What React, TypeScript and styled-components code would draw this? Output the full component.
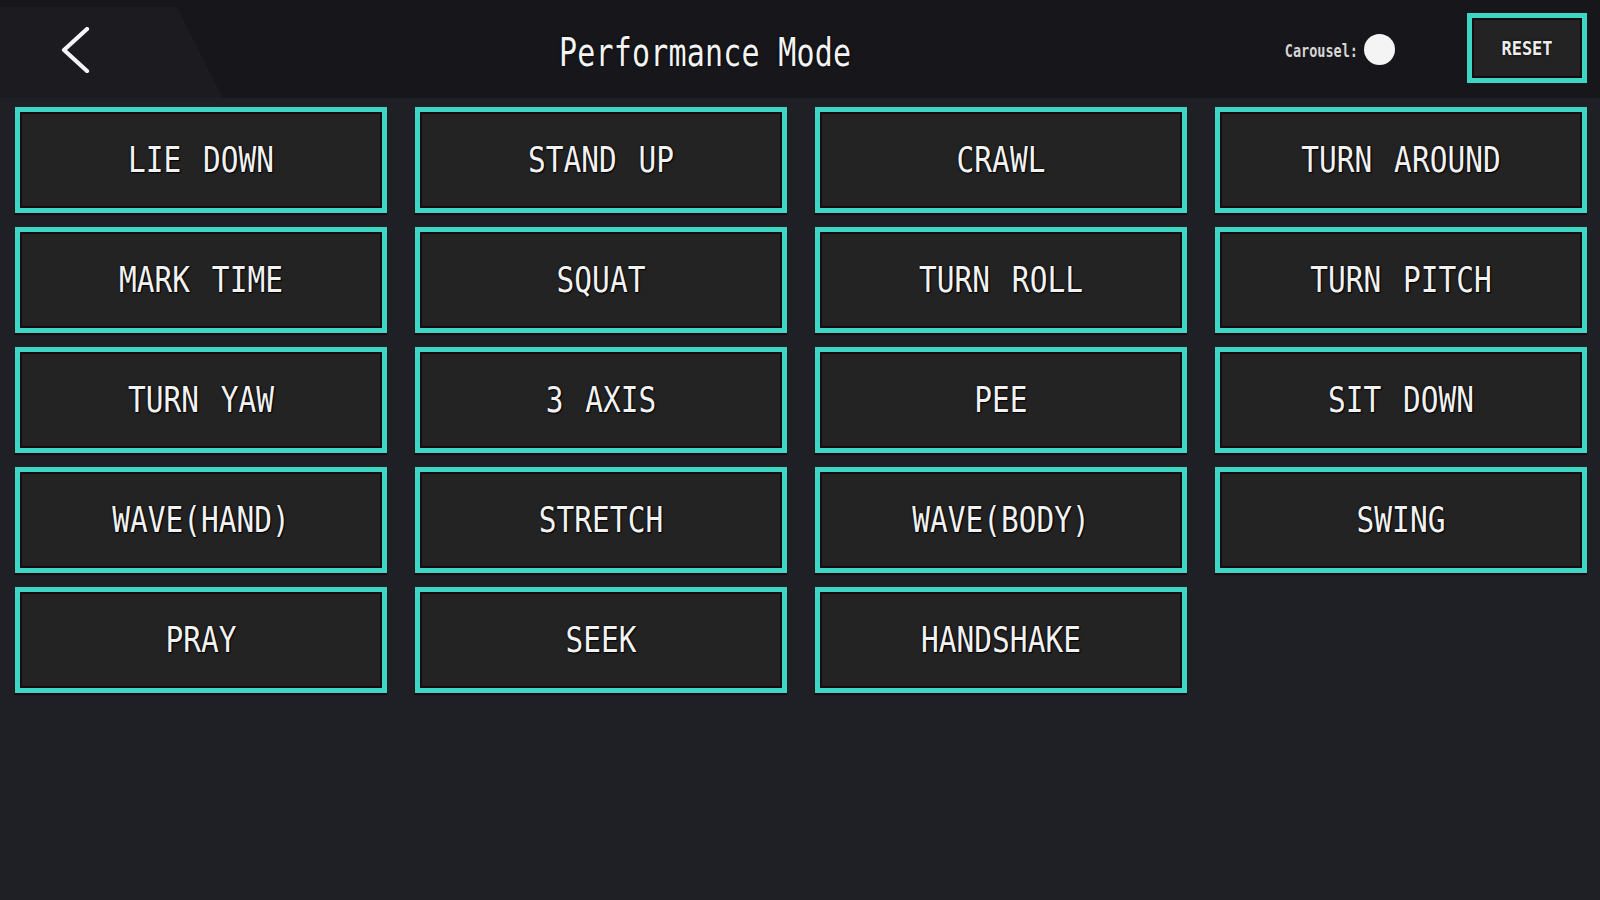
import React, { useState } from 'react'
import styled, { createGlobalStyle } from 'styled-components'

const GlobalStyle = createGlobalStyle`
  html, body {
    margin: 0;
    padding: 0;
    background: #1f2026;
  }
  * {
    box-sizing: border-box;
  }
`

const Page = styled.div`
  width: 1600px;
  height: 900px;
  background: #1f2026;
  display: flex;
  flex-direction: column;
  overflow: hidden;
  font-family: 'DejaVu Sans Mono', 'Liberation Mono', monospace;
`

const Header = styled.header`
  display: grid;
  grid-template-columns: 223px 1fr auto;
  height: 98px;
  background: #17171b;
`

const BackTab = styled.button`
  margin-top: 7px;
  border: none;
  padding: 20px 0 0 60px;
  background: #1c1c20;
  clip-path: polygon(0 0, 177px 0, 223px 100%, 0 100%);
  display: flex;
  align-items: flex-start;
  cursor: pointer;
`

const Title = styled.div`
  display: flex;
  align-items: center;
  padding: 6px 0 0 336px;
`

const TitleText = styled.h1`
  margin: 0;
  display: inline-block;
  font-family: 'DejaVu Sans Mono', 'Liberation Mono', monospace;
  font-weight: normal;
  font-size: 30px;
  letter-spacing: 0.2px;
  color: #f4f4f4;
  transform: scaleY(1.28);
  text-shadow: 0 0 2px #000;
`

const Controls = styled.div`
  display: flex;
  align-items: center;
  padding-right: 13px;
`

const CarouselLabel = styled.span`
  display: inline-block;
  font-family: 'DejaVu Sans Mono', 'Liberation Mono', monospace;
  font-weight: bold;
  font-size: 13.5px;
  color: #d6d6d6;
  transform: scaleY(1.25);
  margin-top: 3px;
`

const Knob = styled.button<{ on: boolean }>`
  width: 31px;
  height: 31px;
  margin-left: 6px;
  border: none;
  border-radius: 50%;
  background: ${({ on }) => (on ? '#3dd6c5' : '#f4f4f4')};
  cursor: pointer;
`

const ResetButton = styled.button`
  align-self: flex-start;
  margin: 13px 0 0 72px;
  width: 120px;
  height: 70px;
  border: 5px solid #3dd6c5;
  background: #232323;
  box-shadow: inset 0 0 0 2px #150c10;
  display: flex;
  align-items: center;
  justify-content: center;
  cursor: pointer;
`

const ResetText = styled.span`
  display: inline-block;
  font-family: 'DejaVu Sans Mono', 'Liberation Mono', monospace;
  font-weight: bold;
  font-size: 17px;
  color: #ededed;
  transform: scaleY(1.15);
  text-shadow: 0 0 2px #000;
`

const Grid = styled.div`
  display: grid;
  grid-template-columns: repeat(4, 372px);
  grid-auto-rows: 106px;
  column-gap: 28px;
  row-gap: 14px;
  padding: 9px 0 0 15px;
`

const ActionButton = styled.button<{ active?: boolean }>`
  border: 5px solid #3dd6c5;
  background: ${({ active }) => (active ? '#2b3a39' : '#232323')};
  box-shadow: inset 0 0 0 2px #150c10, 0 2px 1px #1b0b10;
  display: flex;
  align-items: center;
  justify-content: center;
  padding: 0;
  cursor: pointer;
`

const ActionLabel = styled.span`
  display: inline-block;
  font-family: 'DejaVu Sans Mono', 'Liberation Mono', monospace;
  font-size: 29.5px;
  color: #f2f2f2;
  word-spacing: 4px;
  transform: scaleY(1.2);
  text-shadow: 0 0 2px #000, 1px 1px 1px #000;
`

const actions = [
  'LIE DOWN',
  'STAND UP',
  'CRAWL',
  'TURN AROUND',
  'MARK TIME',
  'SQUAT',
  'TURN ROLL',
  'TURN PITCH',
  'TURN YAW',
  '3 AXIS',
  'PEE',
  'SIT DOWN',
  'WAVE(HAND)',
  'STRETCH',
  'WAVE(BODY)',
  'SWING',
  'PRAY',
  'SEEK',
  'HANDSHAKE',
]

export default function App() {
  const [carousel, setCarousel] = useState<boolean>(false)
  const [current, setCurrent] = useState<string | null>(null)

  return (
    <>
      <GlobalStyle />
      <Page>
        <Header>
          <BackTab aria-label="Back">
            <svg width="30" height="46" viewBox="0 0 30 46">
              <polyline
                points="27,2 4,23 27,44"
                fill="none"
                stroke="#f4f4f4"
                strokeWidth="4.2"
                strokeLinecap="round"
                strokeLinejoin="round"
              />
            </svg>
          </BackTab>
          <Title>
            <TitleText>Performance Mode</TitleText>
          </Title>
          <Controls>
            <CarouselLabel>Carousel:</CarouselLabel>
            <Knob on={carousel} onClick={() => setCarousel(!carousel)} />
            <ResetButton onClick={() => setCurrent(null)}>
              <ResetText>RESET</ResetText>
            </ResetButton>
          </Controls>
        </Header>

        <Grid>
          {actions.map((name) => (
            <ActionButton
              key={name}
              active={current === name}
              onClick={() => setCurrent(name)}
            >
              <ActionLabel>{name}</ActionLabel>
            </ActionButton>
          ))}
        </Grid>
      </Page>
    </>
  )
}
